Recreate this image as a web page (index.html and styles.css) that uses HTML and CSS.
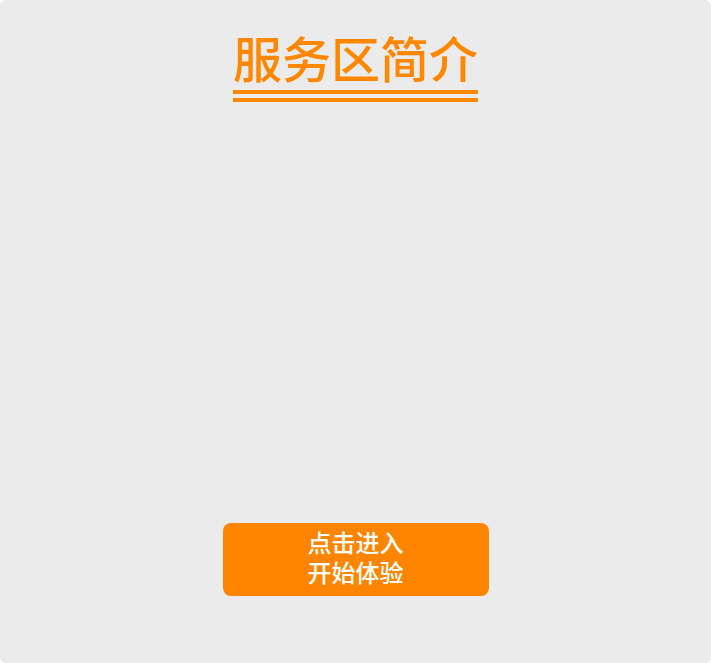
FILE: index.html
```html
<!DOCTYPE html>
<html lang="zh">
<head>
<meta charset="utf-8">
<link rel="stylesheet" href="styles.css">
</head>
<body>
<div class="card">
  <div class="head"><h1 class="title">服务区简介</h1></div>
  <div class="spacer"></div>
  <button class="enter"><span class="line">点击进入</span><span class="line">开始体验</span></button>
</div>
</body>
</html>
```
FILE: styles.css
```css
html, body { margin: 0; padding: 0; background: #ffffff; }
body { font-family: "Noto Sans CJK SC", "Noto Sans", sans-serif; }
.card {
  width: 711px; height: 663px; box-sizing: border-box;
  background: #ebebeb; border-radius: 6px;
  display: flex; flex-direction: column; align-items: center;
  padding: 32px 0 67px;
}
.head { display: flex; justify-content: center; }
.title {
  margin: 0; font-size: 49px; line-height: 49px; font-weight: 500;
  color: #ff8800; padding: 0 0 9px; border-bottom: 12px double #ff8800;
}
.spacer { flex: 1; }
.enter {
  width: 266px; height: 73px; border: none; border-radius: 8px;
  background: #ff8500; color: #ffffff; font-family: inherit;
  font-size: 24px; line-height: 30px; font-weight: 500;
  padding: 0 0 5px; cursor: pointer;
  display: flex; flex-direction: column; align-items: center; justify-content: center;
}
.line { display: block; height: 30px; }
```
